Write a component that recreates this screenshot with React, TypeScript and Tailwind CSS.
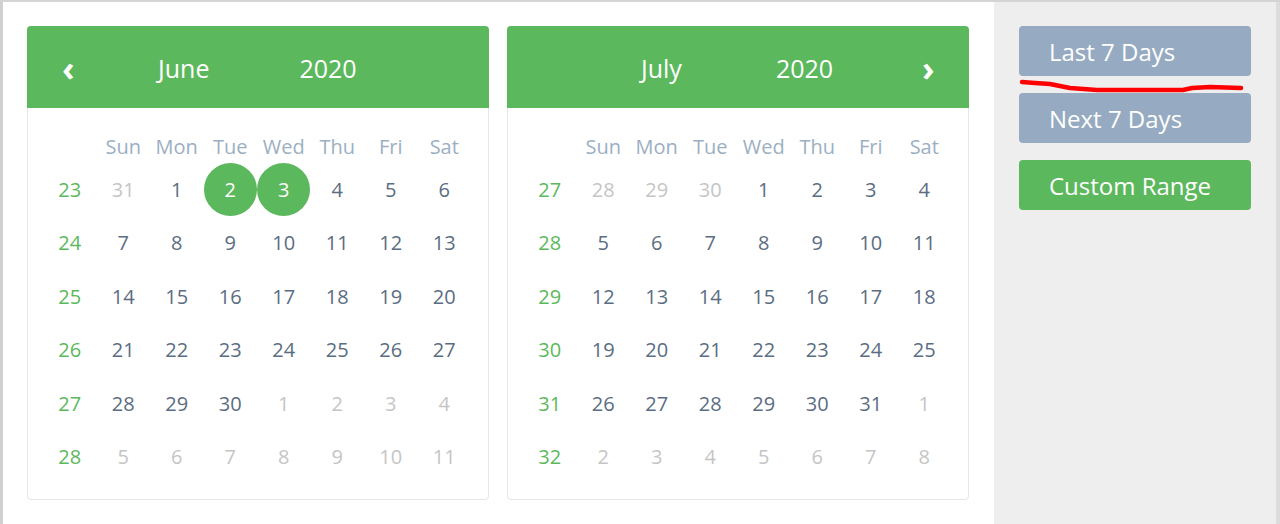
import React from "react";

type Day = { d: number; muted?: boolean; sel?: boolean };

const names = ["Sun", "Mon", "Tue", "Wed", "Thu", "Fri", "Sat"];

const june: { weeks: number[]; data: Day[][] } = {
  weeks: [23, 24, 25, 26, 27, 28],
  data: [
    [{ d: 31, muted: true }, { d: 1 }, { d: 2, sel: true }, { d: 3, sel: true }, { d: 4 }, { d: 5 }, { d: 6 }],
    [7, 8, 9, 10, 11, 12, 13].map((d) => ({ d })),
    [14, 15, 16, 17, 18, 19, 20].map((d) => ({ d })),
    [21, 22, 23, 24, 25, 26, 27].map((d) => ({ d })),
    [{ d: 28 }, { d: 29 }, { d: 30 }, ...[1, 2, 3, 4].map((d) => ({ d, muted: true }))],
    [5, 6, 7, 8, 9, 10, 11].map((d) => ({ d, muted: true })),
  ],
};

const july: { weeks: number[]; data: Day[][] } = {
  weeks: [27, 28, 29, 30, 31, 32],
  data: [
    [...[28, 29, 30].map((d) => ({ d, muted: true })), { d: 1 }, { d: 2 }, { d: 3 }, { d: 4 }],
    [5, 6, 7, 8, 9, 10, 11].map((d) => ({ d })),
    [12, 13, 14, 15, 16, 17, 18].map((d) => ({ d })),
    [19, 20, 21, 22, 23, 24, 25].map((d) => ({ d })),
    [...[26, 27, 28, 29, 30, 31].map((d) => ({ d })), { d: 1, muted: true }],
    [2, 3, 4, 5, 6, 7, 8].map((d) => ({ d, muted: true })),
  ],
};

function Calendar({
  data,
  left,
}: {
  data: { weeks: number[]; data: Day[][] };
  left: boolean;
}) {
  return (
    <div className="w-[462px] h-[474px] bg-white border border-[#e6e6e6] rounded-[4px] flex flex-col">
      <div className="h-[82px] -mx-px -mt-px pt-[4px] bg-[#5cb85c] rounded-t-[4px] text-white text-[25px] flex items-center">
        {left ? (
          <>
            <span className="ml-[35px] w-[12px] text-[34px] leading-none font-bold -mt-[2px]">‹</span>
            <span className="ml-[84px]">June</span>
            <span className="ml-[90px]">2020</span>
          </>
        ) : (
          <>
            <span className="ml-[134px]">July</span>
            <span className="ml-[94px]">2020</span>
            <span className="ml-[89px] w-[12px] text-[34px] leading-none font-bold -mt-[2px]">›</span>
          </>
        )}
      </div>
      <div className="px-[15px] pt-[23px]">
        <div className="grid grid-cols-8 w-[428px] h-[32px] items-center text-[20px] text-[#9cafc2]">
          <span />
          {names.map((n) => (
            <span key={n} className="text-center">
              {n}
            </span>
          ))}
        </div>
        {data.data.map((row, i) => (
          <div key={i} className="grid grid-cols-8 w-[428px] h-[53.5px] items-center text-[20px]">
            <span className="text-center text-[#5cb85c]">{data.weeks[i]}</span>
            {row.map((c, j) => (
              <span
                key={j}
                className={
                  c.sel
                    ? "h-[53px] w-[53px] mx-auto rounded-full bg-[#5cb85c] text-white flex items-center justify-center"
                    : c.muted
                    ? "text-center text-[#c5c5c5]"
                    : "text-center text-[#5a6d82]"
                }
              >
                {c.d}
              </span>
            ))}
          </div>
        ))}
      </div>
    </div>
  );
}

export default function App() {
  return (
    <div
      className="relative w-[1280px] h-[524px] flex overflow-hidden bg-white border-t-2 border-[#d4d4d4]"
      style={{ fontFamily: '"Open Sans", "Noto Sans", sans-serif' }}
    >
      <div className="w-[3px] bg-[#d0d0d0]" />
      <div className="w-[991px] pl-[24px] pt-[24px] flex gap-[18px]">
        <Calendar data={june} left />
        <Calendar data={july} left={false} />
      </div>
      <div className="w-[282px] bg-[#eeeeee] pl-[25px] pt-[24px] flex flex-col gap-[17px]">
        <div className="w-[232px] h-[50px] rounded-[4px] bg-[#96abc1] text-white text-[24px] pl-[30px] pt-[2px] flex items-center">
          Last 7 Days
        </div>
        <div className="w-[232px] h-[50px] rounded-[4px] bg-[#96abc1] text-white text-[24px] pl-[30px] pt-[2px] flex items-center">
          Next 7 Days
        </div>
        <div className="w-[232px] h-[50px] rounded-[4px] bg-[#5cb85c] text-white text-[24px] pl-[30px] pt-[2px] flex items-center">
          Custom Range
        </div>
      </div>
      <div className="w-[4px] bg-[#dcdcdc]" />
      <svg className="absolute left-0 top-[-2px] pointer-events-none" width="1280" height="524">
        <path
          d="M1022 82 L1035 83 L1050 84 L1070 88 L1097 90 L1183 90 L1192 88 L1210 87 L1241 88"
          fill="none"
          stroke="#ff0000"
          strokeWidth="4.5"
          strokeLinecap="round"
          strokeLinejoin="round"
        />
      </svg>
    </div>
  );
}
